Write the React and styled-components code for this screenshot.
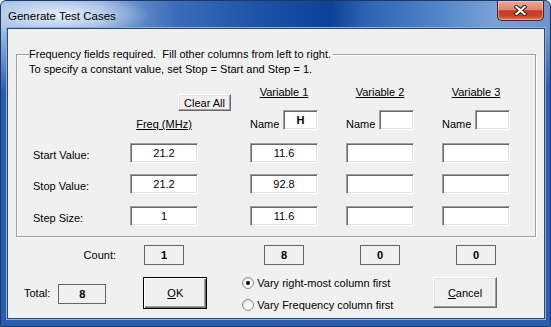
import React from 'react';
import styled, { createGlobalStyle } from 'styled-components';

const GlobalStyle = createGlobalStyle`
  html, body {
    margin: 0;
    padding: 0;
    background: #ffffff;
  }
  body {
    width: 551px;
    height: 327px;
    overflow: hidden;
    font-family: "Liberation Sans", Arial, sans-serif;
    font-size: 11px;
    color: #000;
  }
`;

// label | freq | spacer | var1 | spacer | var2 | spacer | var3
const COLS = '97px 68px 52px 68px 28px 68px 28px 68px';

const Window = styled.div`
  width: 551px;
  height: 327px;
  box-sizing: border-box;
  display: flex;
  flex-direction: column;
  padding: 0 5px 7px 6px;
  border: 1px solid #1c3866;
  border-radius: 6px 6px 0 0;
  background:
    linear-gradient(180deg, rgba(43, 93, 176, 0) 0px, rgba(43, 93, 176, 0) 30px, #2a5cb0 90px),
    radial-gradient(ellipse 90px 22px at 60px 14px, rgba(235, 243, 252, 0.95), rgba(235, 243, 252, 0) 100%),
    linear-gradient(90deg, #9fbde2 0%, #86a8d8 18%, #3a6cb9 32%, #1b51a6 48%, #0c4199 60%, #2c62b3 66%, #5386c9 80%, #79a2d7 90%, #6a95cf 100%);
`;

const TitleBar = styled.div`
  height: 27px;
  display: flex;
  align-items: flex-start;
  padding-left: 1px;
`;

const Title = styled.div`
  font-family: "Liberation Sans", Arial, sans-serif;
  font-size: 11.5px;
  line-height: 14px;
  margin-top: 8px;
  color: #000;
`;

const CloseButton = styled.div`
  margin-left: auto;
  margin-right: 1px;
  width: 47px;
  height: 20px;
  box-sizing: border-box;
  display: flex;
  align-items: center;
  justify-content: center;
  border: 1px solid #5a1d14;
  border-top: none;
  border-radius: 0 0 5px 5px;
  background: linear-gradient(180deg, #eaa99c 0%, #de8472 45%, #c43b22 52%, #c9462c 80%, #e27d5c 100%);
  box-shadow: inset 0 0 0 1px rgba(255, 220, 210, 0.45);
`;

const Client = styled.div`
  flex: 1;
  display: flex;
  flex-direction: column;
  background: #f0f0f0;
  border: 1px solid #26477a;
  box-shadow: 0 0 0 1px #8db0de;
`;

const GroupBox = styled.fieldset`
  margin: 19px 8px 0 8px;
  padding: 2px 0 10px 12px;
  min-width: 0;
  border: 1px solid #a0a0a0;
  box-shadow: inset 1px 1px 0 #ffffff, 1px 1px 0 #ffffff;
`;

const Legend = styled.legend`
  padding: 0 2px 0 0;
  line-height: 13px;
  white-space: pre;
`;

const Intro = styled.div`
  line-height: 13px;
  margin-bottom: 10px;
`;

const Row = styled.div`
  display: grid;
  grid-template-columns: ${COLS};
  height: ${(p) => p.$h || 20}px;
  margin-top: ${(p) => p.$top || 0}px;
  margin-left: ${(p) => p.$left || 4}px;
`;

const Heading = styled.div`
  grid-column: ${(p) => p.$col};
  align-self: ${(p) => p.$align || 'start'};
  justify-self: center;
  line-height: 13px;
  text-decoration: underline;
  margin-bottom: ${(p) => (p.$align === 'end' ? -1 : 0)}px;
`;

const Button = styled.button`
  font-family: "Liberation Sans", Arial, sans-serif;
  font-size: 11px;
  color: #000;
  background: #f0f0f0;
  box-sizing: border-box;
  padding: 0;
  border: 1px solid;
  border-color: #ffffff #696969 #696969 #ffffff;
  box-shadow: inset -1px -1px 0 #a0a0a0, inset 1px 1px 0 #e3e3e3;
  width: ${(p) => p.$w}px;
  height: ${(p) => p.$h}px;
`;

const ClearButton = styled(Button)`
  grid-column: 2 / span 2;
  justify-self: end;
  align-self: end;
  margin-right: 19px;
  margin-bottom: -1px;
`;

const DefaultButton = styled(Button)`
  border-color: #000000;
  box-shadow: inset 1px 1px 0 #ffffff, inset -1px -1px 0 #696969, inset -2px -2px 0 #a0a0a0;
`;

const Mnemonic = styled.span`
  text-decoration: underline;
`;

const RowLabel = styled.div`
  grid-column: 1;
  align-self: end;
  line-height: 13px;
  margin-bottom: 1px;
`;

const TextBox = styled.div`
  grid-column: ${(p) => p.$col};
  width: ${(p) => p.$w || 68}px;
  height: 20px;
  box-sizing: border-box;
  display: flex;
  align-items: center;
  justify-content: center;
  background: #ffffff;
  border: 1px solid;
  border-color: #a0a0a0 #ffffff #ffffff #a0a0a0;
  box-shadow: inset 1px 1px 0 #696969, inset -1px -1px 0 #e3e3e3;
  font-weight: ${(p) => (p.$bold ? 700 : 400)};
  line-height: 13px;
`;

const NameCell = styled.div`
  grid-column: ${(p) => p.$col};
  display: flex;
  justify-content: space-between;
`;

const NameLabel = styled.span`
  align-self: flex-end;
  line-height: 13px;
  margin-bottom: -1px;
`;

const CountRow = styled(Row)`
  margin-left: 25px;
  align-items: center;
`;

const CountLabel = styled.div`
  grid-column: 1;
  text-align: right;
  padding-right: 14px;
`;

const Readout = styled.div`
  grid-column: ${(p) => p.$col || 'auto'};
  justify-self: center;
  width: ${(p) => p.$w || 40}px;
  height: 20px;
  box-sizing: border-box;
  border: 1px solid #646464;
  display: flex;
  align-items: center;
  justify-content: center;
  font-weight: 700;
`;

const BottomRow = styled.div`
  display: flex;
  align-items: center;
  margin-top: 12px;
  padding-left: 16px;
  padding-right: 47px;
  height: 32px;
`;

const TotalBox = styled(Readout)`
  margin-left: 8px;
  margin-top: 2px;
`;

const OkButton = styled(DefaultButton)`
  margin-left: 37px;
`;

const RadioGroup = styled.div`
  margin-left: 35px;
  margin-top: 2px;
  display: flex;
  flex-direction: column;
`;

const RadioRow = styled.label`
  display: flex;
  align-items: center;
  height: 22px;
  gap: 3px;
`;

const RadioDot = styled.span`
  width: 12px;
  height: 12px;
  box-sizing: border-box;
  border-radius: 50%;
  border: 1px solid #8e8f8f;
  background: radial-gradient(circle at 60% 65%, #ffffff 0%, #f4f4f4 45%, #d4d4d4 100%);
  display: flex;
  align-items: center;
  justify-content: center;

  &::after {
    content: '';
    width: 4px;
    height: 4px;
    border-radius: 50%;
    background: ${(p) => (p.$on ? '#000' : 'transparent')};
  }
`;

const CancelButton = styled(Button)`
  margin-left: auto;
  margin-top: -1px;
`;

function CloseGlyph() {
  return (
    <svg width="13" height="11" viewBox="0 0 13 11">
      <path d="M2.5 2 L10.5 9 M10.5 2 L2.5 9" stroke="#3b1610" strokeWidth="4.2" strokeLinecap="square" />
      <path d="M2.5 2 L10.5 9 M10.5 2 L2.5 9" stroke="#ffffff" strokeWidth="2.2" strokeLinecap="square" />
    </svg>
  );
}

const variables = [
  { col: 4, title: 'Variable 1', name: 'H', start: '11.6', stop: '92.8', step: '11.6', count: '8' },
  { col: 6, title: 'Variable 2', name: '', start: '', stop: '', step: '', count: '0' },
  { col: 8, title: 'Variable 3', name: '', start: '', stop: '', step: '', count: '0' },
];

const freq = { start: '21.2', stop: '21.2', step: '1', count: '1' };

const rows = [
  { key: 'start', label: 'Start Value:', top: 13 },
  { key: 'stop', label: 'Stop Value:', top: 11 },
  { key: 'step', label: 'Step Size:', top: 12 },
];

export default function App() {
  return (
    <>
      <GlobalStyle />
      <Window>
        <TitleBar>
          <Title>Generate Test Cases</Title>
          <CloseButton>
            <CloseGlyph />
          </CloseButton>
        </TitleBar>

        <Client>
          <GroupBox>
            <Legend>{'Frequency fields required.  Fill other columns from left to right.'}</Legend>
            <Intro>To specify a constant value, set Stop = Start and Step = 1.</Intro>

            <Row $h={24}>
              <ClearButton $w={53} $h={17}>Clear All</ClearButton>
              {variables.map((v) => (
                <Heading key={v.title} $col={v.col}>{v.title}</Heading>
              ))}
            </Row>

            <Row>
              <Heading $col={2} $align="end">Freq (MHz)</Heading>
              {variables.map((v) => (
                <NameCell key={v.title} $col={v.col}>
                  <NameLabel>Name</NameLabel>
                  <TextBox $w={35} $bold>{v.name}</TextBox>
                </NameCell>
              ))}
            </Row>

            {rows.map((r) => (
              <Row key={r.key} $top={r.top}>
                <RowLabel>{r.label}</RowLabel>
                <TextBox $col={2}>{freq[r.key]}</TextBox>
                {variables.map((v) => (
                  <TextBox key={v.title} $col={v.col}>{v[r.key]}</TextBox>
                ))}
              </Row>
            ))}
          </GroupBox>

          <CountRow $top={8}>
            <CountLabel>Count:</CountLabel>
            <Readout $col={2}>{freq.count}</Readout>
            {variables.map((v) => (
              <Readout key={v.title} $col={v.col}>{v.count}</Readout>
            ))}
          </CountRow>

          <BottomRow>
            <span>Total:</span>
            <TotalBox $w={48}>8</TotalBox>
            <OkButton $w={64} $h={32}>
              <Mnemonic>O</Mnemonic>K
            </OkButton>
            <RadioGroup>
              <RadioRow>
                <RadioDot $on />
                Vary right-most column first
              </RadioRow>
              <RadioRow>
                <RadioDot />
                Vary Frequency column first
              </RadioRow>
            </RadioGroup>
            <CancelButton $w={64} $h={31}>
              <Mnemonic>C</Mnemonic>ancel
            </CancelButton>
          </BottomRow>
        </Client>
      </Window>
    </>
  );
}
